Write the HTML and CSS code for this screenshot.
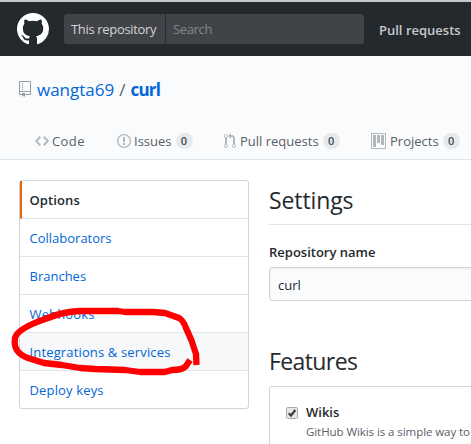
FILE: index.html
```html
<!DOCTYPE html>
<html lang="en">
<head>
<meta charset="utf-8">
<title>wangta69/curl settings</title>
<link rel="stylesheet" href="styles.css">
</head>
<body>
<header class="topbar">
  <svg class="mark" viewBox="0 0 16 16"><path fill="#fff" d="M8 0C3.58 0 0 3.58 0 8c0 3.54 2.29 6.53 5.47 7.59.4.07.55-.17.55-.38 0-.19-.01-.82-.01-1.49-2.01.37-2.53-.49-2.69-.94-.09-.23-.48-.94-.82-1.13-.28-.15-.68-.52-.01-.53.63-.01 1.08.58 1.23.82.72 1.21 1.87.87 2.33.66.07-.52.28-.87.51-1.07-1.78-.2-3.64-.89-3.64-3.95 0-.87.31-1.59.82-2.15-.08-.2-.36-1.02.08-2.12 0 0 .67-.21 2.2.82.64-.18 1.32-.27 2-.27s1.36.09 2 .27c1.53-1.04 2.2-.82 2.2-.82.44 1.1.16 1.92.08 2.12.51.56.82 1.27.82 2.15 0 3.07-1.87 3.75-3.65 3.95.29.25.54.73.54 1.48 0 1.07-.01 1.93-.01 2.2 0 .21.15.46.55.38A8.01 8.01 0 0 0 16 8c0-4.42-3.58-8-8-8z"/></svg>
  <div class="search"><span class="scope">This repository</span><span class="query">Search</span></div>
  <a class="toplink">Pull requests</a>
</header>
<section class="pagehead">
  <h1 class="repo">
    <svg width="12" height="16" viewBox="0 0 12 16"><path fill="#959da5" fill-rule="evenodd" d="M4 9H3V8h1v1zm0-3H3v1h1V6zm0-2H3v1h1V4zm0-2H3v1h1V2zm8-1v12c0 .55-.45 1-1 1H6v2l-1.500-1.500L3 16v-2H1c-.55 0-1-.45-1-1V1c0-.55.45-1 1-1h10c.55 0 1 .45 1 1zm-1 10H1v2h2v-1h3v1h5v-2zm0-10H1v9h10V1z"/></svg>
    <a class="owner">wangta69</a><span class="slash">/</span><a class="name">curl</a>
  </h1>
  <nav class="tabs">
    <a><svg width="14" height="16" viewBox="0 0 14 16"><path fill-rule="evenodd" d="M9.500 3L8 4.500 11.500 8 8 11.500 9.500 13 14 8 9.500 3zm-5 0L0 8l4.500 5L6 11.500 2.500 8 6 4.500 4.500 3z"/></svg><span class="code">Code</span></a>
    <a><svg width="14" height="16" viewBox="0 0 14 16"><path fill-rule="evenodd" d="M7 2.300c3.140 0 5.700 2.560 5.700 5.700s-2.560 5.700-5.700 5.700A5.710 5.710 0 0 1 1.300 8c0-3.140 2.560-5.700 5.700-5.700zM7 1C3.140 1 0 4.140 0 8s3.140 7 7 7 7-3.140 7-7-3.140-7-7-7zm1 3H6v5h2V4zm0 6H6v2h2v-2z"/></svg><span>Issues</span><b>0</b></a>
    <a><svg width="12" height="16" viewBox="0 0 12 16"><path fill-rule="evenodd" d="M11 11.280V5c-.03-.78-.34-1.470-.94-2.060C9.460 2.350 8.780 2.030 8 2H7V0L4 3l3 3V4h1c.27.02.48.11.69.31.21.2.3.42.31.69v6.280A1.993 1.993 0 0 0 10 15a1.993 1.993 0 0 0 1-3.720zm-1 2.920c-.66 0-1.200-.55-1.200-1.200 0-.65.55-1.200 1.200-1.200.65 0 1.200.55 1.200 1.200 0 .65-.55 1.200-1.200 1.200zM4 3c0-1.110-.89-2-2-2a1.993 1.993 0 0 0-1 3.720v6.560A1.993 1.993 0 0 0 2 15a1.993 1.993 0 0 0 1-3.720V4.720c.59-.34 1-.98 1-1.720zm-.8 10c0 .66-.55 1.200-1.200 1.200-.65 0-1.200-.55-1.200-1.200 0-.65.55-1.200 1.200-1.200.65 0 1.200.55 1.200 1.200zM2 4.200C1.340 4.200.8 3.650.8 3c0-.65.55-1.200 1.200-1.200.65 0 1.200.55 1.200 1.200 0 .65-.55 1.200-1.200 1.200z"/></svg><span>Pull requests</span><b>0</b></a>
    <a><svg width="15" height="16" viewBox="0 0 15 16"><path fill-rule="evenodd" d="M10 12h3V2h-3v10zm-4-2h3V2H6v8zm-4 4h3V2H2v12zm-1 1h13V1H1v14zM14 0H1a1 1 0 0 0-1 1v14a1 1 0 0 0 1 1h13a1 1 0 0 0 1-1V1a1 1 0 0 0-1-1z"/></svg><span>Projects</span><b>0</b></a>
  </nav>
</section>
<main class="layout">
  <aside class="menu">
    <a class="selected">Options</a>
    <a>Collaborators</a>
    <a>Branches</a>
    <a class="wide">Webhooks</a>
    <a class="hover wide">Integrations &amp; services</a>
    <a class="wide">Deploy keys</a>
    <svg class="scribble" width="210" height="90" viewBox="0 300 210 90"><path d="M196.500 365L196 354Q192 340 186 328Q183 320 179 318L165 313 153 312 125 312 118 311 80 311Q62 312 48 318C33 323 17 330 15 338C13 350 20 355 28 358L44 363 62 365 80 368 95 369 125 370 140 372 165 372 172 370Q183 370 186 366L190 360"/></svg>
  </aside>
  <section class="content">
    <h2 class="settings">Settings</h2>
    <label class="label">Repository name</label>
    <div class="field">curl</div>
    <h2 class="features">Features</h2>
    <div class="box">
      <svg class="check" width="12" height="12" viewBox="0 0 12 12"><rect x=".5" y=".5" width="11" height="11" rx="1" fill="#e8e8e8" stroke="#a8a8a8"/><path d="M2.700 6.200L5 8.500 9.300 3" fill="none" stroke="#404040" stroke-width="2.200"/></svg>
      <div><div class="wikis">Wikis</div><div class="desc">GitHub Wikis is a simple way to</div></div>
    </div>
  </section>
</main>
</body>
</html>
```
FILE: styles.css
```css
* { box-sizing: border-box; }
html { overflow: hidden; }
body { margin: 0; width: 471px; height: 444px; overflow: hidden; background: #fff; color: #24292e; font: 13px/20px "Open Sans", "Noto Sans", sans-serif; white-space: nowrap; }
h1, h2 { margin: 0; font-weight: 400; }
.topbar { height: 56px; border-top: 2px solid #c2c8ca; background: #24292e; display: flex; align-items: center; padding-left: 17px; }
.mark { width: 32px; height: 32px; flex: none; margin-top: -1px; }
.search { margin-left: 15px; width: 300px; height: 30px; flex: none; display: flex; border-radius: 3px; background: #404448; line-height: 31px; }
.scope { width: 102px; padding-left: 7px; border-right: 1px solid #282d32; color: #d1d3d4; letter-spacing: -.33px; }
.query { padding-left: 7px; color: #85888b; letter-spacing: -.35px; }
.toplink { margin: 2px 0 0 15px; font-weight: 600; color: #c8c9cb; }
.pagehead { height: 104px; background: #fafbfc; border-bottom: 1px solid #e1e4e8; padding-top: 20px; }
.repo { display: flex; align-items: center; height: 28px; padding-left: 19px; font-size: 17px; color: #586069; }
.repo svg { margin-right: 6px; margin-top: -2px; }
.slash { margin: 0 5px; }
.owner, .name { color: #0366d6; }
.name { font-weight: 700; letter-spacing: -.8px; }
.tabs { display: grid; grid-template-columns: 82px 107px 147px 100px; margin: 27px 0 0 35px; color: #586069; }
.tabs a { display: flex; align-items: center; height: 20px; }
.tabs svg { flex: none; margin-right: 3px; fill: #b4b7ba; }
.tabs a:nth-child(3) svg, .tabs a:nth-child(4) svg { margin-right: 4px; }
.tabs b { width: 17px; height: 16px; margin-left: 4px; border-radius: 8px; background: #e7e9eb; color: #444d56; font-size: 11px; line-height: 16px; font-weight: 600; text-align: center; }
.code { letter-spacing: .4px; }
.layout { display: flex; padding: 20px 0 0 19px; }
.menu { position: relative; width: 230px; height: 229px; flex: none; border: 1px solid #d1d5da; border-radius: 3px; }
.menu a { display: block; height: 38px; padding: 9px 0 0 9.500px; border-bottom: 1px solid #e1e4e8; color: #0366d6; }
.menu a:nth-child(6) { border-bottom: 0; }
.menu .wide { letter-spacing: .15px; }
.menu .selected { padding-left: 7.500px; border-left: 2px solid #e36209; color: #24292e; font-weight: 600; letter-spacing: .1px; }
.menu .hover { background: #f6f8fa; }
.scribble { position: absolute; left: -20px; top: 119px; }
.scribble path { fill: none; stroke: #f00; stroke-width: 6.300; stroke-linejoin: round; }
.content { margin-left: 20px; width: 220px; flex: none; }
.settings, .features { font-size: 23px; line-height: 36px; }
.settings { height: 45px; padding-top: 2px; border-bottom: 1px solid #e1e4e8; letter-spacing: -.1px; }
.label { display: block; margin-top: 17px; font-weight: 600; }
.field { height: 34px; margin-top: 5px; padding: 7px 8px; border: 1px solid #d1d5da; border-radius: 3px; background: #fafbfc; box-shadow: inset 0 1px 2px rgba(27,31,35,.075); }
.features { margin-top: 42px; height: 43px; letter-spacing: -.6px; }
.box { height: 58px; display: flex; padding: 15px 0 0 16px; border: 1px solid #d1d5da; border-bottom: 0; border-radius: 3px 3px 0 0; }
.check { flex: none; margin: 5px 8px 0 0; }
.wikis { font-weight: 600; }
.desc { font-size: 11.500px; color: #586069; letter-spacing: -.07px; }
```
